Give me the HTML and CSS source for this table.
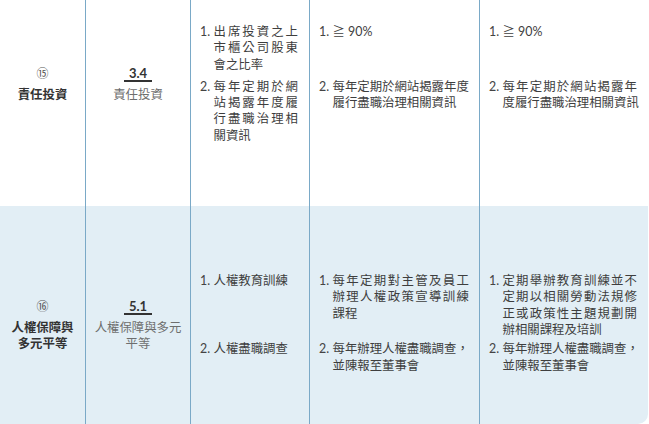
FILE: index.html
```html
<!DOCTYPE html>
<html lang="zh-Hant">
<head>
<meta charset="utf-8">
<link rel="stylesheet" href="styles.css">
</head>
<body>
<table class="tbl">
  <colgroup><col class="c1"><col class="c2"><col class="c3"><col class="c4"><col class="c5"></colgroup>
  <tbody class="r1">
    <tr class="s1">
      <td class="topic" rowspan="2"><div class="circ">⑮</div><div class="name">責任投資</div></td>
      <td class="code" rowspan="2"><div class="num"><span class="u-orange">3.4</span></div><div class="lbl">責任投資</div></td>
      <td class="item c3i"><div class="li"><span class="n">1.</span><div class="t wrap">出席投資之上市櫃公司股東會之比率</div></div></td>
      <td class="item c4i"><div class="li"><span class="n">1.</span><div class="t"><span class="ln">≧ <span class="lat">90%</span></span></div></div></td>
      <td class="item c5i"><div class="li"><span class="n">1.</span><div class="t"><span class="ln">≧ <span class="lat">90%</span></span></div></div></td>
    </tr>
    <tr class="s2">
      <td class="item c3i"><div class="li"><span class="n">2.</span><div class="t wrap">每年定期於網站揭露年度履行盡職治理相關資訊</div></div></td>
      <td class="item c4i"><div class="li"><span class="n">2.</span><div class="t"><span class="ln">每年定期於網站揭露年度</span><span class="ln">履行盡職治理相關資訊</span></div></div></td>
      <td class="item c5i"><div class="li"><span class="n">2.</span><div class="t"><span class="ln j">每年定期於網站揭露年</span><span class="ln">度履行盡職治理相關資訊</span></div></div></td>
    </tr>
  </tbody>
  <tbody class="r2">
    <tr class="s1">
      <td class="topic" rowspan="2"><div class="circ">⑯</div><div class="name">人權保障與<br>多元平等</div></td>
      <td class="code" rowspan="2"><div class="num"><span class="u-red">5.1</span></div><div class="lbl">人權保障與多元<br>平等</div></td>
      <td class="item c3i"><div class="li"><span class="n">1.</span><div class="t">人權教育訓練</div></div></td>
      <td class="item c4i"><div class="li"><span class="n">1.</span><div class="t"><span class="ln j">每年定期對主管及員工</span><span class="ln j">辦理人權政策宣導訓練</span><span class="ln">課程</span></div></div></td>
      <td class="item c5i"><div class="li"><span class="n">1.</span><div class="t"><span class="ln j">定期舉辦教育訓練並不</span><span class="ln j">定期以相關勞動法規修</span><span class="ln j">正或政策性主題規劃開</span><span class="ln">辦相關課程及培訓</span></div></div></td>
    </tr>
    <tr class="s2">
      <td class="item c3i"><div class="li"><span class="n">2.</span><div class="t">人權盡職調查</div></div></td>
      <td class="item c4i"><div class="li"><span class="n">2.</span><div class="t"><span class="ln">每年辦理人權盡職調查，</span><span class="ln">並陳報至董事會</span></div></div></td>
      <td class="item c5i last"><div class="li"><span class="n">2.</span><div class="t"><span class="ln">每年辦理人權盡職調查，</span><span class="ln">並陳報至董事會</span></div></div></td>
    </tr>
  </tbody>
</table>
</body>
</html>
```

FILE: styles.css
```css
html, body {
  margin: 0;
  padding: 0;
  background: #ffffff;
}
body {
  font-family: "Lato", "Noto Sans CJK TC", sans-serif;
  font-size: 12.4px;
  line-height: 16.3px;
  color: #3e3e3e;
}
.tbl {
  width: 648px;
  table-layout: fixed;
  border-collapse: separate;
  border-spacing: 0;
}
.c1 { width: 85px; }
.c2 { width: 105px; }
.c3 { width: 119px; }
.c4 { width: 170px; }
.c5 { width: 169px; }

td {
  padding: 0;
  vertical-align: top;
}
.r1 td { background: #ffffff; }
.r2 td { background: #e2eef5; }

.code, .item {
  border-left: 1px solid #7aa9c7;
}

/* topic + code columns */
.topic, .code {
  vertical-align: middle;
  text-align: center;
}
.r1 .topic, .r1 .code { padding: 24px 0 62px; }
.r2 .topic, .r2 .code { padding: 71px 0 50px; }

.circ {
  font-family: "Noto Sans CJK TC", sans-serif;
  font-size: 12px;
  line-height: 14px;
  color: #555555;
  margin-bottom: 6px;
}
.name {
  font-family: "Noto Sans CJK TC", sans-serif;
  font-weight: 700;
  color: #333333;
}
.num {
  display: flex;
  justify-content: center;
  margin-bottom: 4px;
}
.num span {
  display: block;
  font-family: "Lato", sans-serif;
  font-weight: 700;
  font-size: 13px;
  line-height: 14px;
  color: #333333;
  padding: 0 5px;
  border-bottom: 2px solid;
}
.u-orange { border-color: #f3a43a; }
.u-red { border-color: #e5623f; }
.lbl {
  font-family: "Noto Sans CJK TC", sans-serif;
  color: #6e6e6e;
}

/* item columns */
.c3i { padding-left: 9px; padding-right: 11px; }
.c4i { padding-left: 9px; padding-right: 10px; }
.c5i { padding-left: 9px; padding-right: 11px; }

.r1 .s1 .item { padding-top: 24px; padding-bottom: 6px; }
.r1 .s2 .item { padding-bottom: 62px; }
.r2 .s1 .item { padding-top: 67px; padding-bottom: 3px; }
.r2 .s2 .item { padding-bottom: 50px; }

.last { border-bottom-right-radius: 10px; }

.li {
  display: flex;
}
.n {
  flex: 0 0 13.5px;
  font-family: "Lato", sans-serif;
  color: #444444;
}
.t {
  flex: 1 1 auto;
  min-width: 0;
}
.t.wrap {
  text-align: justify;
}
.ln {
  display: block;
  white-space: nowrap;
}
.ln.j {
  text-align: justify;
  text-align-last: justify;
}
.lat {
  font-family: "Lato", sans-serif;
}
```
